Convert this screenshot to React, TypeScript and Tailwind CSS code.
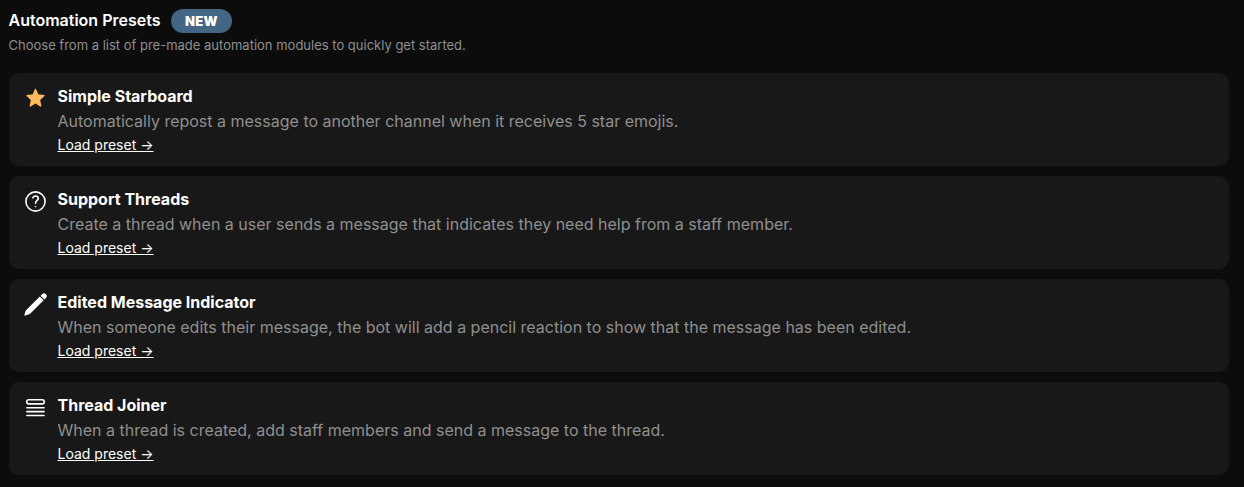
import React from "react";

const Star = () => (
  <svg viewBox="-0.5 -0.5 25 25" className="size-[25px]" fill="#ffb95e" stroke="#ffb95e" strokeWidth="1.4" strokeLinejoin="round">
    <path d="M12 3l2.400 5.500 6.100.6-4.600 4.100 1.300 6.200-5.200-3.200-5.200 3.200 1.300-6.200L3.500 9.100l6.100-.6z" />
  </svg>
);
const Help = () => (
  <svg viewBox="-0.5 -0.5 25 25" className="size-[25px]" fill="none" stroke="#fff" strokeWidth="1.6" strokeLinecap="round" strokeLinejoin="round">
    <circle cx="12" cy="12" r="9.600" />
    <path d="M9.300 8.300c.8-2.200 3.900-2.400 5-.8 1.100 1.700.1 2.900-.9 3.700-.9.700-1.400 1.200-1.400 2.600M12 17h.008v.008H12z" />
  </svg>
);
const Pencil = () => (
  <svg viewBox="-0.5 -0.5 25 25" className="size-[25px]" fill="#fff">
    <path d="M22.400 1.700a2.700 2.700 0 0 0-3.800 0l-1.500 1.500 3.800 3.800 1.500-1.500a2.700 2.700 0 0 0 0-3.800ZM20.200 7.800l-3.900-3.900L3.200 16.900a5.250 5.250 0 0 0-1.300 2.150l-1 3.100a.75.75 0 0 0 .933.933l3.100-1a5.250 5.250 0 0 0 2.214-1.320Z" />
  </svg>
);
const Queue = () => (
  <svg viewBox="-0.5 -0.5 25 25" className="size-[25px]" fill="none" stroke="#fff" strokeWidth="1.6" strokeLinecap="round" strokeLinejoin="round">
    <path d="M3.400 12.200h17.200m-17.200 3.900h17.200M3.400 20h17.200M5.300 4.200h13.400a2.100 2.100 0 0 1 0 4.200H5.300a2.100 2.100 0 0 1 0-4.200Z" />
  </svg>
);

const presets = [
  { icon: <Star />, title: "Simple Starboard", text: "Automatically repost a message to another channel when it receives 5 star emojis." },
  { icon: <Help />, title: "Support Threads", text: "Create a thread when a user sends a message that indicates they need help from a staff member." },
  { icon: <Pencil />, title: "Edited Message Indicator", text: "When someone edits their message, the bot will add a pencil reaction to show that the message has been edited." },
  { icon: <Queue />, title: "Thread Joiner", text: "When a thread is created, add staff members and send a message to the thread." },
];

export default function App() {
  return (
    <main className="h-[487px] overflow-hidden bg-[#0c0c0c] pt-2 pr-[15px] pl-[9px] font-['Inter',sans-serif] text-white">
      <header className="-ml-[0.5px] h-[65px]">
        <div className="flex h-[25px] items-center gap-[10.5px]">
          <h1 className="h-[25px] text-base leading-[25px] font-semibold">Automation Presets</h1>
          <span className="flex h-6 items-center rounded-full bg-[#426684] px-[14px] pt-[2px] text-[13px] font-black tracking-[0.3px]">NEW</span>
        </div>
        <p className="mt-[2px] text-[13px] leading-5 text-[#8f8f8f]">Choose from a list of pre-made automation modules to quickly get started.</p>
      </header>
      <ul className="flex flex-col gap-[10px]">
        {presets.map((p) => (
          <li key={p.title} className="flex h-[93px] gap-[9.5px] rounded-[10px] bg-[#181818] pt-3 pl-3.5">
            <div className="mt-px shrink-0">{p.icon}</div>
            <div>
              <h2 className="text-base leading-[22px] font-[650]">{p.title}</h2>
              <p className="mt-[2px] text-base leading-[25px] text-[#8f8f8f]">{p.text}</p>
              <button className="block text-sm leading-[22px] underline">Load preset →</button>
            </div>
          </li>
        ))}
      </ul>
    </main>
  );
}
